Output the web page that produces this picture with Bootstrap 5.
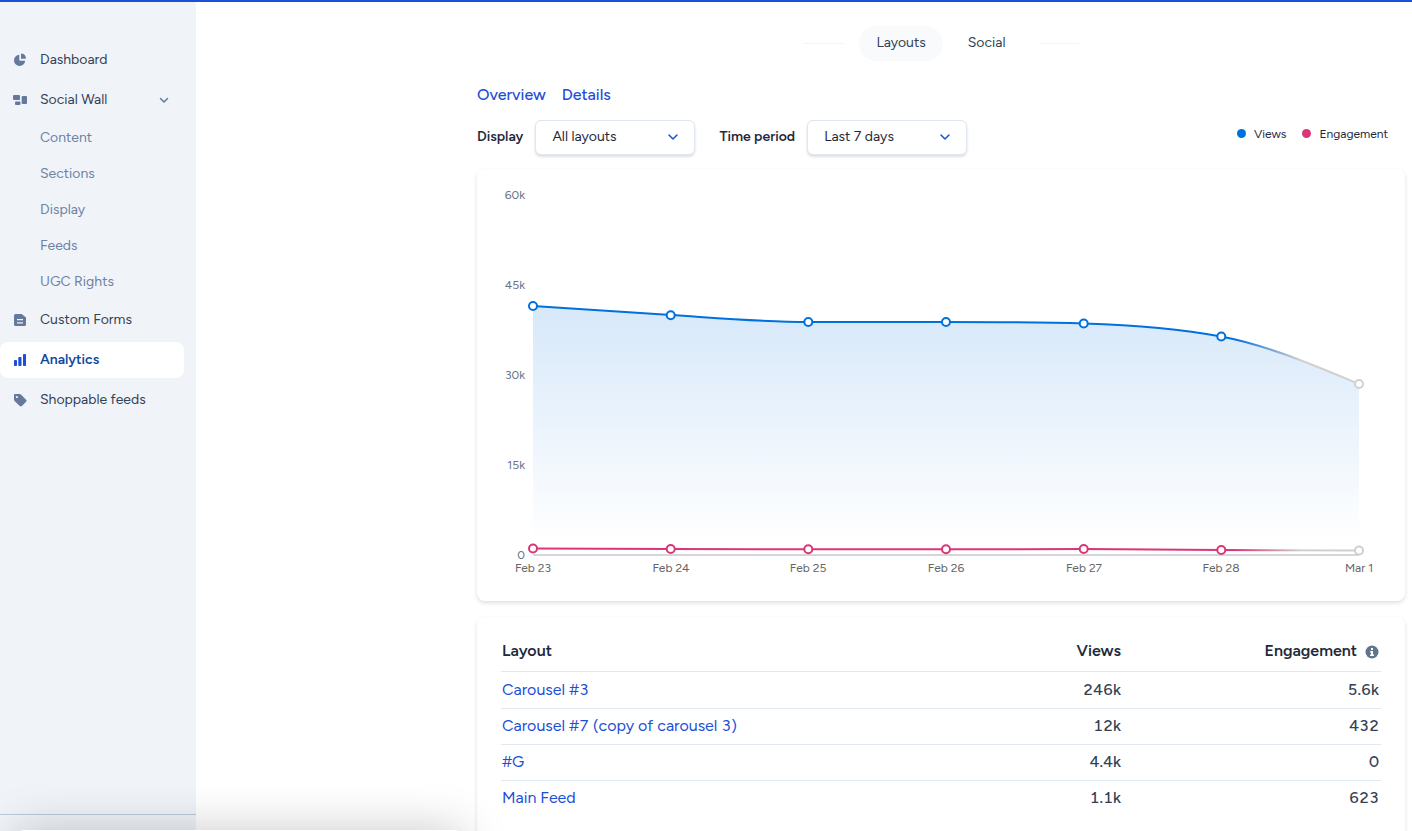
<!DOCTYPE html>
<html lang="en">
<head>
<meta charset="utf-8">
<meta name="viewport" content="width=device-width, initial-scale=1">
<title>Analytics</title>
<link href="https://cdn.jsdelivr.net/npm/bootstrap@5.3.0/dist/css/bootstrap.min.css" rel="stylesheet">
<style>
  body { font-family: Figtree, Inter, sans-serif; font-size: 14px; line-height: 20px; color: #1e293b; background: #fff; }
  a { color: #1d4ed8; text-decoration: none; }
  .app { border-top: 2px solid #1d4ed8; }
  .side { width: 196px; background: #f0f4f9; }
  .side ul { margin-bottom: 2px; }
  .side-link { display: flex; align-items: center; height: 36px; margin-bottom: 4px; padding: 0 16px 0 12px; width: 184px; border-radius: 8px; color: #334155; font-size: 14px; }
  .side-link svg { width: 16px; height: 16px; fill: #64799b; }
  .side-link span { margin-left: 12px; }
  .side-link.current { background: #fff; color: #0f479d; font-weight: 600; }
  .side-link.current svg { fill: #1d4ed8; }
  .side-link .chev { fill: none; stroke: #64799b; }
  .side-link.parent { margin-bottom: 2px; }
  .side-sub { display: flex; align-items: center; height: 36px; padding: 0 0 0 40px; color: #6e82a3; font-size: 14px; }
  .side-foot { height: 17px; border-top: 1px solid #bcc9d8; }
  .content { max-width: 935px; padding: 24px 7px 0 0; }
  .rule { width: 40px; height: 1px; background: #f1f3f5; }
  .pill { height: 35px; padding: 0 17px 1px; border-radius: 18px; color: #334155; font-size: 14px; display: flex; align-items: center; }
  .pill.current { background: #f8fafc; }
  .subtabs { font-size: 16px; font-weight: 500; margin-top: 24px; }
  .filters { margin-top: 15px; }
  .filters label { font-weight: 600; font-size: 14px; padding-bottom: 2px; }
  .picker { width: 160px; height: 35px; font-size: 14px; color: #1e293b; border: 1px solid #dfe6f1; border-radius: 6px; padding: 0 36px 2px 16px; box-shadow: 0 2px 3px rgba(0,0,0,.13); background-position: right 15px top 10px; background-size: 12px;
    background-image: url("data:image/svg+xml,%3Csvg xmlns='http://www.w3.org/2000/svg' viewBox='0 0 12 12'%3E%3Cpath d='M2 4l4 4 4-4' fill='none' stroke='%231d4ed8' stroke-width='1.5' stroke-linecap='round' stroke-linejoin='round'/%3E%3C/svg%3E"); }
  .legend-key { font-size: 12px; padding: 0 17px 8px 0; }
  .dot { width: 9px; height: 9px; border-radius: 50%; }
  .dot-views { background: #0070dd; }
  .dot-eng { background: #d93678; }
  .panel { background: #fff; border-radius: 8px; box-shadow: 0 2px 4px rgba(0,0,0,.13); }
  .chart-panel { margin: 14px 0 16px; }
  .chart-panel text { font-size: 12px; fill: #64748b; }
  .chart-panel .days text { fill: #666; text-anchor: middle; }
  .chart-panel .scale text { text-anchor: end; }
  .table-panel { padding: 16px 24px 40px; }
  .stats { width: 100%; font-size: 16px; font-variant-numeric: tabular-nums; }
  .stats th, .stats td { height: 36px; padding: 0 2px 0 1px; border-top: 1px solid #e2e8f0; }
  .stats thead th { height: 38px; border: 0; font-weight: 600; color: #1e293b; padding-bottom: 2px; }
  .stats tbody tr:first-child > * { height: 37px; }
  .stats tbody th { font-weight: 400; }
  .stats td { font-weight: 500; color: #334155; text-align: right; }
  .stats .num { width: 258px; text-align: right; }
  .drawer { left: 16px; width: 446px; height: 80px; bottom: -79px; background: #fff; border-radius: 8px; box-shadow: 0 0 48px rgba(0,0,0,.22); }
</style>
</head>
<body>
<div class="app vh-100 d-flex overflow-hidden">
  <nav class="side flex-shrink-0 d-flex flex-column" aria-label="Main">
    <div class="flex-grow-1 pt-4">
      <div class="pt-3">
      <a class="side-link" href="#"><svg viewBox="0 0 16 16"><path d="M7.300 2.800a5.600 5.600 0 1 0 5.900 6H8.300a1 1 0 0 1-1-1z"/><path d="M9 2.100c0-.4.3-.6.7-.5a5 5 0 0 1 4.200 4.600c0 .4-.2.6-.5.6H9.600a.6.600 0 0 1-.6-.6z"/></svg><span>Dashboard</span></a>
      <a class="side-link parent" href="#" aria-expanded="true"><svg viewBox="0 0 16 16"><rect x="1" y="3" width="7" height="5" rx="1"/><rect x="9.700" y="4" width="5.300" height="8" rx="1"/><rect x="3" y="9.600" width="5.500" height="3.400" rx="1"/></svg><span class="flex-grow-1">Social Wall</span><svg class="chev overflow-visible" viewBox="0 0 16 16"><path d="M8.500 6.500L12 10l3.500-3.500" stroke-width="1.500" stroke-linecap="round" stroke-linejoin="round"/></svg></a>
      <ul class="list-unstyled">
        <li><a class="side-sub" href="#">Content</a></li>
        <li><a class="side-sub" href="#">Sections</a></li>
        <li><a class="side-sub" href="#">Display</a></li>
        <li><a class="side-sub" href="#">Feeds</a></li>
        <li><a class="side-sub" href="#">UGC Rights</a></li>
      </ul>
      <a class="side-link" href="#"><svg viewBox="0 0 16 16"><path fill-rule="evenodd" d="M3.500 2h6.200L14 5.500v7a1.500 1.500 0 0 1-1.500 1.500h-9A1.500 1.500 0 0 1 2 12.500v-9A1.500 1.500 0 0 1 3.500 2zM5 7v1.300h6V7zm0 3.200v1.300h6v-1.300z"/></svg><span>Custom Forms</span></a>
      <a class="side-link current" href="#" aria-current="page"><svg viewBox="0 0 16 16"><rect x="2" y="8" width="3" height="6" rx=".8"/><rect x="6.300" y="5" width="3.200" height="9" rx=".8"/><rect x="11" y="2" width="3" height="12" rx=".8"/></svg><span>Analytics</span></a>
      <a class="side-link" href="#"><svg viewBox="0 0 16 16"><path fill-rule="evenodd" d="M3 2h4.800c.4 0 .8.200 1.100.5l5.200 5.200c.6.600.6 1.500 0 2.100l-4.200 4.300c-.6.600-1.500.6-2.100 0L2.500 8.900A1.600 1.600 0 0 1 2 7.800V3a1 1 0 0 1 1-1zM4.900 4a1.100 1.100 0 1 0 0 2.200 1.100 1.100 0 0 0 0-2.200z"/></svg><span>Shoppable feeds</span></a>
      </div>
    </div>
    <div class="side-foot"></div>
  </nav>

  <main class="flex-grow-1">
    <div class="content ms-auto">
      <nav class="d-flex justify-content-center align-items-center" aria-label="Analytics type">
        <div class="rule me-3"></div>
        <a class="pill current" href="#" aria-current="page">Layouts</a>
        <a class="pill ms-2" href="#">Social</a>
        <div class="rule ms-3"></div>
      </nav>
      <div class="subtabs d-flex gap-3"><a href="#">Overview</a><a href="#">Details</a></div>
      <div class="filters d-flex align-items-center">
        <label for="display" class="me-2 pe-1">Display</label>
        <select id="display" class="form-select picker me-4"><option>All layouts</option><option>Carousel #3</option></select>
        <label for="period" class="me-2 pe-1">Time period</label>
        <select id="period" class="form-select picker"><option>Last 7 days</option><option>Last 30 days</option></select>
        <div class="legend-key d-flex align-items-center gap-2 ms-auto">
          <span class="dot dot-views"></span><span class="me-2">Views</span>
          <span class="dot dot-eng"></span><span>Engagement</span>
        </div>
      </div>

      <section class="panel chart-panel">
        <svg class="d-block w-100" viewBox="0 0 928 432" role="img" aria-label="Views and engagement per day">
          <defs>
            <linearGradient id="area" x1="0" y1="137" x2="0" y2="386" gradientUnits="userSpaceOnUse"><stop offset="0" stop-color="#0070dd" stop-opacity=".16"/><stop offset=".95" stop-color="#0070dd" stop-opacity="0"/></linearGradient>
            <linearGradient id="vline" x1="56" y1="0" x2="882" y2="0" gradientUnits="userSpaceOnUse"><stop offset=".85" stop-color="#0070dd"/><stop offset=".93" stop-color="#d0d0d0"/></linearGradient>
            <linearGradient id="eline" x1="56" y1="0" x2="882" y2="0" gradientUnits="userSpaceOnUse"><stop offset=".85" stop-color="#d93678"/><stop offset=".93" stop-color="#d0d0d0"/></linearGradient>
          </defs>
          <g class="scale"><text x="48" y="30">60k</text><text x="48" y="120">45k</text><text x="48" y="210">30k</text><text x="48" y="300">15k</text><text x="48" y="390">0</text></g>
          <path fill="url(#area)" d="M56 137C102 140 148 143 194 146S285 153 331 153S423 153 469 153S561 153 607 154.500S698 159 744 167.500S836 196 882 215V386H56z"/>
          <path d="M56 386H882" stroke="#d6d6d6" stroke-width="2"/>
          <path fill="none" stroke="url(#vline)" stroke-width="2" d="M56 137C102 140 148 143 194 146S285 153 331 153S423 153 469 153S561 153 607 154.500S698 159 744 167.500S836 196 882 215"/>
          <path fill="none" stroke="url(#eline)" stroke-width="2" d="M56 379.500L194 380L331 380.300L469 380.300L607 380L744 381L882 381.500"/>
          <g fill="#fff" stroke="#0070dd" stroke-width="2"><circle cx="56" cy="137" r="4"/><circle cx="193.700" cy="146.300" r="4"/><circle cx="331.300" cy="153" r="4"/><circle cx="469" cy="153" r="4"/><circle cx="606.700" cy="154.500" r="4"/><circle cx="744.300" cy="167.500" r="4"/><circle cx="882" cy="215" r="4" stroke="#d0d0d0"/></g>
          <g fill="#fff" stroke="#d93678" stroke-width="2"><circle cx="56" cy="379.500" r="4"/><circle cx="193.700" cy="380" r="4"/><circle cx="331.300" cy="380.300" r="4"/><circle cx="469" cy="380.300" r="4"/><circle cx="606.700" cy="380" r="4"/><circle cx="744.300" cy="381" r="4"/><circle cx="882" cy="381.500" r="4" stroke="#d0d0d0"/></g>
          <g class="days"><text x="56" y="403">Feb 23</text><text x="194" y="403">Feb 24</text><text x="331" y="403">Feb 25</text><text x="469" y="403">Feb 26</text><text x="607" y="403">Feb 27</text><text x="744" y="403">Feb 28</text><text x="882" y="403">Mar 1</text></g>
        </svg>
      </section>

      <section class="panel table-panel">
        <table class="stats">
          <thead><tr><th scope="col">Layout</th><th scope="col" class="num">Views</th><th scope="col" class="num">Engagement <svg class="ms-1" width="14" height="14" viewBox="0 0 14 14" role="img" aria-label="Info"><circle cx="7" cy="7" r="6.500" fill="#64748b"/><path d="M6 3h2v2H6zM5.200 6H8v3.500h1V11H5V9.500h1V7.400h-.8z" fill="#fff"/></svg></th></tr></thead>
          <tbody>
            <tr><th scope="row"><a href="#">Carousel #3</a></th><td>246k</td><td>5.6k</td></tr>
            <tr><th scope="row"><a href="#">Carousel #7 (copy of carousel 3)</a></th><td>12k</td><td>432</td></tr>
            <tr><th scope="row"><a href="#">#G</a></th><td>4.4k</td><td>0</td></tr>
            <tr><th scope="row"><a href="#">Main Feed</a></th><td>1.1k</td><td>623</td></tr>
          </tbody>
        </table>
      </section>
    </div>
  </main>
</div>
<div class="drawer position-fixed"></div>
<script src="https://cdn.jsdelivr.net/npm/bootstrap@5.3.0/dist/js/bootstrap.bundle.min.js"></script>
</body>
</html>
